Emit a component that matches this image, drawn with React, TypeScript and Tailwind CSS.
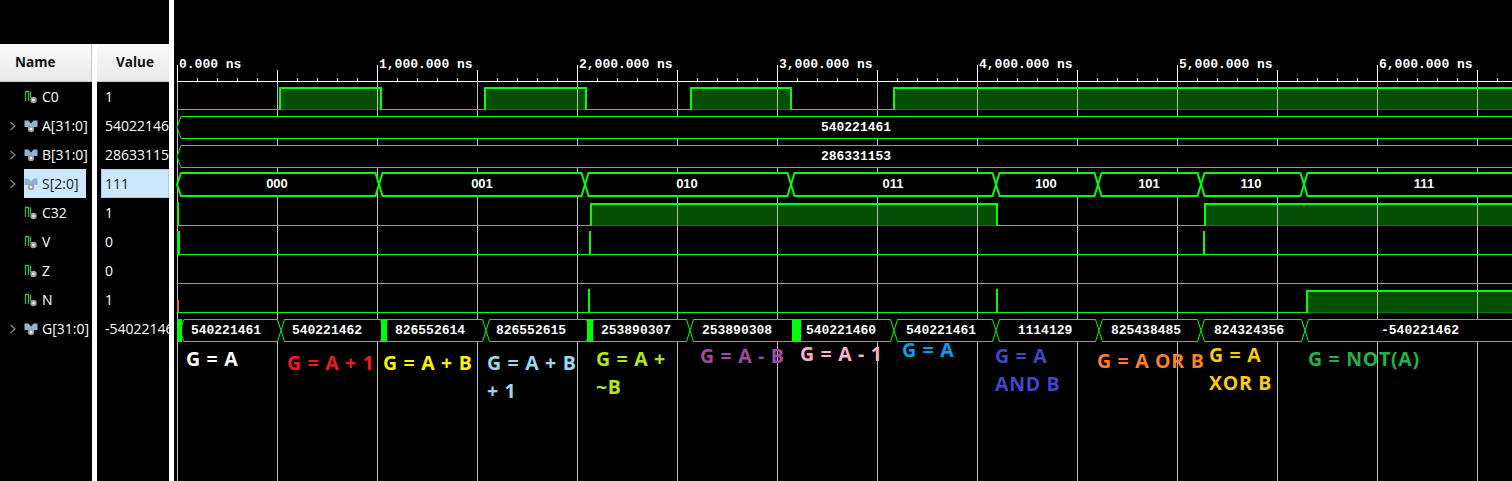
import React from 'react'

const LIME = '#00ff00'
const FILL = '#054f05'
const DIM = '#0b7a0b'
const GRID = '#bdbdbd'
const T0 = 177
const END = 1540

const rowTop = (i: number) => 82 + 29 * i

type Span = [number, number]

interface LogicSig {
  row: number
  highs?: Span[]
  spikes?: [number, number][]
}

interface BusSig {
  row: number
  edges: number[]
  labels: [number, string][]
  thick?: boolean
  sans?: boolean
  blocks?: [number, number][]
}

const logic: LogicSig[] = [
  { row: 0, highs: [[279, 381], [484, 586], [690, 791], [893, END]] },
  { row: 4, highs: [[590, 997], [1204, END]], spikes: [[177, 2]] },
  { row: 5, spikes: [[177, 3], [589, 2], [1203, 2]] },
  { row: 6 },
  { row: 7, highs: [[1306, END]], spikes: [[588, 2], [996, 2]] },
]

const buses: BusSig[] = [
  { row: 1, edges: [T0, END], labels: [[856, '540221461']] },
  { row: 2, edges: [T0, END], labels: [[856, '286331153']] },
  {
    row: 3,
    edges: [T0, 379, 585, 791, 996, 1098, 1201, 1304, END],
    labels: [[277, '000'], [482, '001'], [687, '010'], [893, '011'], [1046, '100'], [1149, '101'], [1251, '110'], [1424, '111']],
    thick: true,
    sans: true,
  },
  {
    row: 8,
    edges: [180, 281, 384, 486, 590, 690, 796, 894, 996, 1099, 1201, 1305, END],
    labels: [
      [226, '540221461'], [327, '540221462'], [430, '826552614'], [531, '826552615'],
      [636, '253890307'], [737, '253890308'], [841, '540221460'], [941, '540221461'],
      [1045, '1114129'], [1146, '825438485'], [1249, '824324356'], [1420, '-540221462'],
    ],
    blocks: [[177, 5], [381, 6], [587, 6], [792, 9]],
  },
]

const names = [
  { name: 'C0', value: '1', bus: false },
  { name: 'A[31:0]', value: '540221461', bus: true },
  { name: 'B[31:0]', value: '286331153', bus: true },
  { name: 'S[2:0]', value: '111', bus: true, selected: true },
  { name: 'C32', value: '1', bus: false },
  { name: 'V', value: '0', bus: false },
  { name: 'Z', value: '0', bus: false },
  { name: 'N', value: '1', bus: false },
  { name: 'G[31:0]', value: '-540221462', bus: true },
]

const notes = [
  { cls: 'left-[12px] top-[345px] text-white', lines: ['G = A'] },
  { cls: 'left-[113px] top-[349px] text-[#ed1c24]', lines: ['G = A + 1'] },
  { cls: 'left-[209px] top-[349px] text-[#fff200]', lines: ['G = A + B'] },
  { cls: 'left-[313px] top-[349px] text-[#99d9ea]', lines: ['G = A + B', '+ 1'] },
  { cls: 'left-[422px] top-[345px] text-[#b5e61d]', lines: ['G = A +', '~B'] },
  { cls: 'left-[526px] top-[342px] text-[#a349a4]', lines: ['G = A - B'] },
  { cls: 'left-[626px] top-[340px] text-[#ffaec9]', lines: ['G = A - 1'] },
  { cls: 'left-[728px] top-[336px] text-[#00a2e8]', lines: ['G = A'] },
  { cls: 'left-[821px] top-[342px] text-[#3f48cc]', lines: ['G = A', 'AND B'] },
  { cls: 'left-[923px] top-[347px] text-[#ff7f27]', lines: ['G = A OR B'] },
  { cls: 'left-[1035px] top-[341px] text-[#ffc90e]', lines: ['G = A', 'XOR B'] },
  { cls: 'left-[1134px] top-[345px] text-[#22b14c]', lines: ['G = NOT(A)'] },
]

function LogicIcon() {
  return (
    <svg width="14" height="14" viewBox="0 0 14 14" className="shrink-0">
      <path d="M1.5 11V1.5H4.5V11M6.5 1.5V8" fill="none" stroke="#3cb44b" strokeWidth="1.3" />
      <circle cx="9.5" cy="10" r="3.2" fill="#a0a0a0" />
      <circle cx="9.5" cy="10" r="1.3" fill="#f0f0f0" />
    </svg>
  )
}

function BusIcon() {
  return (
    <svg width="14" height="14" viewBox="0 0 14 14" className="shrink-0">
      <path d="M0.5 1.5H4.5L7 4.5L9.5 1.5H13.5V8H0.5Z" fill="#8db6d6" />
      <circle cx="7" cy="10" r="3.2" fill="#a0a0a0" />
      <circle cx="7" cy="10" r="1.3" fill="#f0f0f0" />
    </svg>
  )
}

function Chevron() {
  return (
    <svg width="8" height="10" viewBox="0 0 8 10">
      <path d="M1.5 1L6 5L1.5 9" fill="none" stroke="#8a8a8a" strokeWidth="1.2" />
    </svg>
  )
}

function busGeom(b: BusSig) {
  const top = b.thick ? 173 : rowTop(b.row) + 5.5
  const bot = b.thick ? 196 : rowTop(b.row) + 27.5
  return { top, bot, mid: (top + bot) / 2 }
}

function Waveforms() {
  const grid = Array.from({ length: 14 }, (_, k) => T0 + 100 * k)
  const minor = Array.from({ length: 68 }, (_, k) => T0 + 20 * k)
  const majors = Array.from({ length: 7 }, (_, k) => T0 + 200 * k)

  return (
    <svg width="1338" height="481" viewBox="174 0 1338 481" className="block" shapeRendering="crispEdges">
      {/* high fills sit under the grid */}
      {logic.map((s) =>
        (s.highs ?? []).map(([a, b]) => {
          const hi = rowTop(s.row) + 5
          const lo = rowTop(s.row) + 27
          return (
            <g key={`f${s.row}-${a}`}>
              <rect x={a} y={hi} width={b - a} height={lo - hi} fill={FILL} />
              <rect x={a} y={lo} width={b - a} height={1} fill={DIM} />
            </g>
          )
        })
      )}

      {grid.map((x) => (
        <rect key={`g${x}`} x={x} y={82} width={1} height={400} fill={GRID} />
      ))}

      {buses.map((b) => {
        const { top, bot, mid } = busGeom(b)
        const h = 3.5
        return (
          <g key={`b${b.row}`}>
            {b.edges.slice(0, -1).map((a, i) => {
              const e = b.edges[i + 1]
              const ha = i === 0 ? 4 : h
              const pts = `${a},${mid} ${a + ha},${top} ${e - h},${top} ${e},${mid} ${e - h},${bot} ${a + ha},${bot}`
              return (
                <polygon
                  key={a}
                  points={pts}
                  fill="#000"
                  stroke={LIME}
                  strokeWidth={b.thick ? 2 : 1}
                  shapeRendering="auto"
                />
              )
            })}
            {(b.blocks ?? []).map(([x, w]) => (
              <rect key={`k${x}`} x={x} y={top - 0.5} width={w} height={bot - top + 1} fill={LIME} />
            ))}
            {b.labels.map(([x, text]) => (
              <text
                key={`${x}${text}`}
                x={x}
                y={mid + 3}
                textAnchor="middle"
                fill="#fff"
                fontFamily={b.sans ? '"Liberation Sans", Arial, sans-serif' : '"Liberation Mono", "Courier New", monospace'}
                fontWeight="bold"
                fontSize={13}
                shapeRendering="auto"
              >
                {text}
              </text>
            ))}
          </g>
        )
      })}

      {logic.map((s) => {
        const hi = rowTop(s.row) + 5
        const lo = rowTop(s.row) + 27
        let d = `M${T0} ${lo + 0.5}`
        for (const [a, b] of s.highs ?? []) {
          d += ` H${a + 0.5} V${hi + 1} M${b + 0.5} ${hi + 1} V${lo + 0.5}`
        }
        d += ` H${END}`
        return (
          <g key={`l${s.row}`}>
            <path d={d} fill="none" stroke={LIME} strokeWidth={1} />
            {(s.highs ?? []).map(([a, b]) => (
              <g key={a}>
                <rect x={a} y={hi} width={b - a + 1} height={2} fill={LIME} />
                <rect x={a} y={hi} width={2} height={lo - hi + 1} fill={LIME} />
                <rect x={b - 1} y={hi} width={2} height={lo - hi + 1} fill={LIME} />
              </g>
            ))}
            {(s.spikes ?? []).map(([x, w]) => (
              <rect key={x} x={x} y={hi - 1} width={w} height={lo - hi + 2} fill={LIME} />
            ))}
          </g>
        )
      })}
      <rect x={177} y={300} width={2} height={12} fill="#e07a1f" />

      {/* ruler */}
      <rect x={T0} y={81} width={END - T0} height={1} fill="#fff" />
      {minor.map((x) => (
        <rect key={`m${x}`} x={x} y={78} width={1} height={4} fill="#fff" />
      ))}
      {majors.map((x) => (
        <rect key={`h${x}`} x={x + 100} y={70} width={1} height={12} fill="#fff" />
      ))}
      {majors.map((x, k) => (
        <g key={`M${x}`}>
          <rect x={x} y={65} width={1} height={17} fill="#fff" />
          <text
            x={x + 2}
            y={68}
            fill="#fff"
            fontFamily='"Liberation Mono", "Courier New", monospace'
            fontWeight="bold"
            fontSize={13}
            shapeRendering="auto"
          >
            {k === 0 ? '0.000 ns' : `${k},000.000 ns`}
          </text>
        </g>
      ))}
    </svg>
  )
}

export default function App() {
  return (
    <div className="flex h-[481px] w-[1512px] overflow-hidden bg-black font-['Open_Sans',sans-serif] text-[14px] text-white">
      {/* Name column */}
      <div className="flex w-[92px] shrink-0 flex-col">
        <div className="h-[44px]" />
        <div className="flex h-[38px] items-center border-b border-r border-[#c6c6c6] bg-linear-to-b from-[#fafafa] to-[#e9e9e9] pl-[15px] text-[13.5px] font-bold text-[#111]">
          Name
        </div>
        {names.map((r) => (
          <div key={r.name} className="flex h-[29px] items-center">
            <div className="flex w-[24px] justify-center pl-[2px]">{r.bus && <Chevron />}</div>
            <div
              className={
                r.selected
                  ? 'flex h-full w-[62px] items-center gap-[4px] bg-[#cce8ff] text-[#1a1a1a]'
                  : 'flex h-full items-center gap-[4px]'
              }
            >
              {r.bus ? <BusIcon /> : <LogicIcon />}
              <span className="whitespace-nowrap">{r.name}</span>
            </div>
          </div>
        ))}
      </div>

      <div className="mt-[44px] w-[5px] shrink-0 bg-white" />

      {/* Value column */}
      <div className="flex w-[72px] shrink-0 flex-col overflow-hidden">
        <div className="h-[44px]" />
        <div className="flex h-[38px] items-center justify-center border-b border-[#c6c6c6] bg-linear-to-b from-[#fafafa] to-[#e9e9e9] pl-[4px] text-[13.5px] font-bold text-[#111]">
          Value
        </div>
        {names.map((r) => (
          <div key={r.name} className="flex h-[29px] items-center">
            {r.selected ? (
              <div className="ml-[4px] flex h-full flex-1 items-center border border-[#99d1ff] bg-[#cce8ff] pl-[3px] text-[#1a1a1a]">
                {r.value}
              </div>
            ) : (
              <div className="whitespace-nowrap pl-[8px]">{r.value}</div>
            )}
          </div>
        ))}
      </div>

      <div className="w-[5px] shrink-0 bg-white" />

      {/* Waveform pane */}
      <div className="relative flex-1 overflow-hidden">
        <Waveforms />
        {notes.map((n) => (
          <div
            key={n.cls}
            className={`absolute whitespace-pre font-['Open_Sans',sans-serif] text-[19.5px] font-bold leading-[28px] tracking-[0.7px] ${n.cls}`}
          >
            {n.lines.map((l) => (
              <div key={l}>{l}</div>
            ))}
          </div>
        ))}
      </div>
    </div>
  )
}
